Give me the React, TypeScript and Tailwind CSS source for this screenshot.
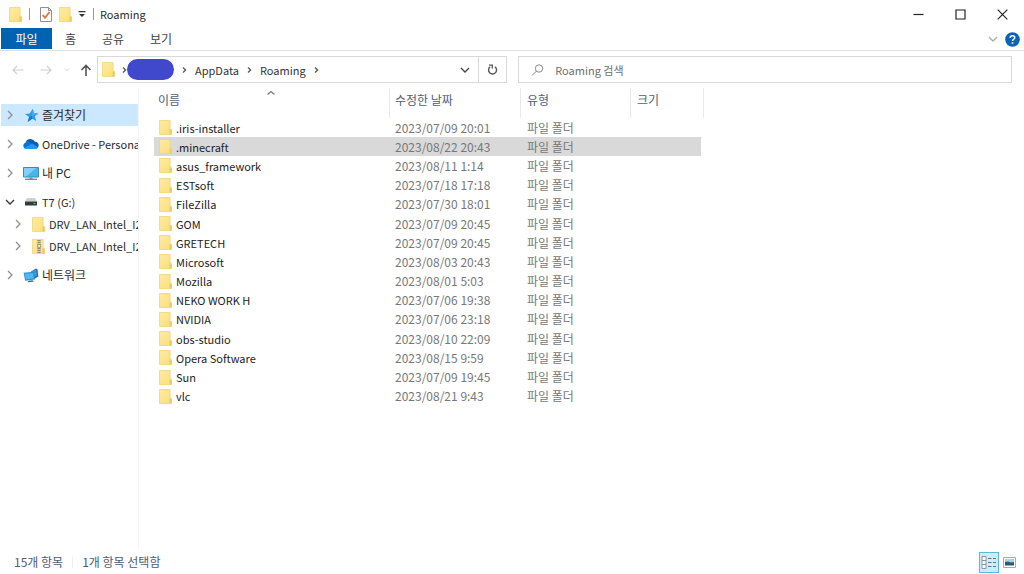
import { useId, type ReactNode } from "react";

type Entry = { name: string; modified: string };

const entries: Entry[] = [
  { name: ".iris-installer", modified: "2023/07/09 20:01" },
  { name: ".minecraft", modified: "2023/08/22 20:43" },
  { name: "asus_framework", modified: "2023/08/11 1:14" },
  { name: "ESTsoft", modified: "2023/07/18 17:18" },
  { name: "FileZilla", modified: "2023/07/30 18:01" },
  { name: "GOM", modified: "2023/07/09 20:45" },
  { name: "GRETECH", modified: "2023/07/09 20:45" },
  { name: "Microsoft", modified: "2023/08/03 20:43" },
  { name: "Mozilla", modified: "2023/08/01 5:03" },
  { name: "NEKO WORK H", modified: "2023/07/06 19:38" },
  { name: "NVIDIA", modified: "2023/07/06 23:18" },
  { name: "obs-studio", modified: "2023/08/10 22:09" },
  { name: "Opera Software", modified: "2023/08/15 9:59" },
  { name: "Sun", modified: "2023/07/09 19:45" },
  { name: "vlc", modified: "2023/08/21 9:43" },
];

function FolderIcon({ zip = false }: { zip?: boolean }) {
  const id = useId();
  return (
    <svg width="13" height="15" viewBox="0 0 13 15" className="shrink-0" aria-hidden="true">
      <defs>
        <linearGradient id={id} x1="0" y1="0" x2="1" y2="1">
          <stop offset="0" stopColor="#ffeba0" />
          <stop offset="1" stopColor="#fade7c" />
        </linearGradient>
      </defs>
      <path d="M.5.5h10.600v8.300l1.400.8v4.900H.5z" fill={`url(#${id})`} stroke="#efd478" strokeWidth=".8" />
      <path d="M10.600 9.200l1.900.6v4.700h-1.900z" fill="#ecc95f" />
      {zip && (
        <>
          <path d="M5 1h4v13H5z" fill="#d8cf9f" />
          <path d="M7 1v13" stroke="#8f8a70" strokeWidth="3" strokeDasharray="1 1" />
          <path d="M5.800 5.500h2.600v3H5.800z" fill="#f4f0dc" stroke="#8a8672" strokeWidth=".7" />
        </>
      )}
    </svg>
  );
}

function Chevron({ dir, className = "" }: { dir: "right" | "down" | "up"; className?: string }) {
  const d = { right: "M3 1l4 4-4 4", down: "M1 3l4 4 4-4", up: "M1.500 6.500L5 3.500l3.500 3" }[dir];
  return (
    <svg width="10" height="10" viewBox="0 0 10 10" fill="none" stroke="currentColor" className={`shrink-0 ${className}`} aria-hidden="true">
      <path d={d} strokeWidth="1.300" />
    </svg>
  );
}

function CrumbArrow() {
  return (
    <svg width="5" height="8" viewBox="0 0 5 8" fill="none" stroke="#555" strokeWidth="1.300" className="shrink-0" aria-hidden="true">
      <path d="M1 1.500L3.600 4 1 6.500" />
    </svg>
  );
}

function StarIcon() {
  return (
    <svg width="15" height="15" viewBox="0 0 15 15" aria-hidden="true">
      <path d="M8.800.8l1.100 4.300 4.500.3-3.600 2.800 1.500 4.900-4.100-2.400-4.500 3.400 1.400-5.200L.9 6l4.800-.6z" fill="#2f9be4" />
      <path d="M8.800.8l-.9 7.300 6.500-2.700-4.500-.3z" fill="#48b0ee" />
      <path d="M8.200 10.700l-4.500 3.400 1.400-5.200 2.800-.8z" fill="#1b79c4" />
    </svg>
  );
}

function CloudIcon() {
  return (
    <svg width="16" height="12" viewBox="0 0 16 12" aria-hidden="true">
      <path d="M3.500 11A3.400 3.400 0 0 1 2.600 4.400 4.900 4.900 0 0 1 11.700 3.700 3.800 3.800 0 0 1 12.500 11z" fill="#1270c9" />
      <path d="M5 3.500 12 7l2.800 2.600A3.600 3.600 0 0 0 11.700 3.700 4.900 4.900 0 0 0 3.900 3z" fill="#0d5cad" />
      <path d="M1 10 9.500 5.500 15 9.500Q14.200 11 12.500 11h-9Q1.800 11 1 10z" fill="#2596ea" />
    </svg>
  );
}

function PcIcon() {
  return (
    <svg width="16" height="15" viewBox="0 0 16 15" aria-hidden="true">
      <path d="M.5 1.500h15v9.500H.5z" fill="#45b4ef" stroke="#4a86ab" />
      <path d="M1 2h12L3 10.500H1z" fill="#82d0f7" />
      <path d="M6.500 11.500h3V13h-3z" fill="#7d8b95" />
      <path d="M2 13.300h12" stroke="#6d8ba1" strokeWidth="1.400" />
    </svg>
  );
}

function DriveIcon() {
  return (
    <svg width="12" height="8" viewBox="0 0 12 8" aria-hidden="true">
      <path d="M2 0h8l2 3.500H0z" fill="#cdd0d0" />
      <path d="M0 3.500h12v4H0z" fill="#353b3b" />
      <path d="M8.500 5.500h2" stroke="#53c5a1" />
    </svg>
  );
}

function NetworkIcon() {
  return (
    <svg width="16" height="15" viewBox="0 0 16 15" aria-hidden="true">
      <path d="M8 3.500 13 .500 14.500 1.500 15.300 8.500 11 11z" fill="#1f6fae" />
      <path d="M8.500 3.800 12.800 1.500 14 7.500 10.500 9z" fill="#3f9bd6" />
      <path d="M.6 4.800 11 3.800l1 7.700-9.800 1.200z" fill="#238fd2" />
      <path d="M1.600 5.700 10.100 4.900l.8 5.700-8 1z" fill="#53b6ec" />
      <path d="M4.500 13l5-.8 1.600 1.300-5.600.8z" fill="#3b6785" />
    </svg>
  );
}

type NavProps = { icon: ReactNode; label: string; latin?: boolean; open?: boolean; nested?: boolean; active?: boolean };

function NavItem({ icon, label, latin = false, open = false, nested = false, active = false }: NavProps) {
  return (
    <li className={active ? "bg-[#cce8ff]" : ""}>
      <button type="button" aria-expanded={open} className={`flex h-[22px] w-full items-center overflow-hidden text-left whitespace-nowrap ${nested ? "pl-3" : "pl-1"}`}>
        <Chevron dir={open ? "down" : "right"} className={open ? "text-[#333]" : "text-[#8f8f8f]"} />
        <span className={`mr-[3px] flex w-4 shrink-0 justify-center ${nested ? "ml-[7px]" : "ml-2"}`}>{icon}</span>
        <span className={latin ? "text-[11px]" : ""}>{label}</span>
      </button>
    </li>
  );
}

export default function App() {
  return (
    <div className="flex min-h-screen flex-col bg-white font-['Noto_Sans_CJK_KR',sans-serif] text-[12px] leading-4 text-[#2b2b2b]">
      <header>
        <div className="flex h-7 items-center pl-[9px]">
          <FolderIcon />
          <span className="ml-[7px] h-3 w-px bg-[#999]" />
          <button type="button" aria-label="속성" className="ml-[10px]">
            <svg width="12" height="15" viewBox="0 0 12 15" fill="none" aria-hidden="true">
              <path d="M.5.5h8l3 3v11H.5z" fill="#fafafa" stroke="#8f8f8f" />
              <path d="M8.500.5v3h3" stroke="#8f8f8f" />
              <path d="M2.700 8l2.300 2.800L9.500 5" stroke="#e2733e" strokeWidth="1.800" />
            </svg>
          </button>
          <button type="button" aria-label="새 폴더" className="ml-[7px]">
            <FolderIcon />
          </button>
          <button type="button" aria-label="빠른 실행 도구 모음 사용자 지정" className="ml-[6px]">
            <svg width="8" height="8" viewBox="0 0 8 8" fill="#333" aria-hidden="true">
              <path d="M.5 1h7v1.200h-7zM1 4h6L4 7z" />
            </svg>
          </button>
          <span className="ml-[7px] h-3 w-px bg-[#999]" />
          <h1 className="ml-[6px] text-[11px]">Roaming</h1>
          <div className="mr-px ml-auto flex">
            <button type="button" aria-label="최소화" className="flex h-7 w-[42px] items-center justify-center">
              <svg width="11" height="11" viewBox="0 0 11 11" stroke="#222" aria-hidden="true"><path d="M.5 5.500h10" strokeWidth="1.200" /></svg>
            </button>
            <button type="button" aria-label="최대화" className="flex h-7 w-[42px] items-center justify-center">
              <svg width="11" height="11" viewBox="0 0 11 11" fill="none" stroke="#222" aria-hidden="true"><path d="M1 1h9v9H1z" strokeWidth="1.200" /></svg>
            </button>
            <button type="button" aria-label="닫기" className="flex h-7 w-[42px] items-center justify-center">
              <svg width="11" height="11" viewBox="0 0 11 11" stroke="#222" aria-hidden="true"><path d="M.7.7l9.600 9.600M10.300.7L.7 10.300" strokeWidth="1.200" /></svg>
            </button>
          </div>
        </div>
        <nav className="flex h-[23px] items-center border-b border-[#dedede] pl-px text-[#444]">
          <button type="button" className="h-[21px] w-[51px] self-start bg-[#0063b1] text-white">파일</button>
          <button type="button" className="w-[37px]">홈</button>
          <button type="button" className="w-12">공유</button>
          <button type="button" className="w-12">보기</button>
          <button type="button" aria-label="리본 확장" className="ml-auto text-[#aaa]"><Chevron dir="down" /></button>
          <button type="button" aria-label="도움말" className="mr-1 ml-[7px]">
            <svg width="15" height="15" viewBox="0 0 15 15" fill="none" aria-hidden="true">
              <circle cx="7.500" cy="7.500" r="7.300" fill="#0864b8" />
              <path d="M5.200 5.700q0-2 2.300-2t2.300 1.900q0 1.100-1.200 1.700-1.100.6-1.100 1.600" stroke="#fff" strokeWidth="1.500" />
              <path d="M6.700 10.200h1.600v1.500H6.700z" fill="#fff" />
            </svg>
          </button>
        </nav>
      </header>

      <div className="flex h-[37px] items-center px-3 py-px text-[11px] text-[#333]">
        <button type="button" aria-label="뒤로" className="text-[#cfcfcf]">
          <svg width="12" height="12" viewBox="0 0 12 12" fill="none" stroke="currentColor" aria-hidden="true"><path d="M11.500 6H1M5 2L1 6l4 4" strokeWidth="1.200" /></svg>
        </button>
        <button type="button" aria-label="앞으로" className="ml-4 text-[#cfcfcf]">
          <svg width="12" height="12" viewBox="0 0 12 12" fill="none" stroke="currentColor" aria-hidden="true"><path d="M.5 6H11M7 2l4 4-4 4" strokeWidth="1.200" /></svg>
        </button>
        <button type="button" aria-label="최근 위치" className="ml-3 text-[#cfcfcf]">
          <svg width="6" height="4" viewBox="0 0 6 4" fill="none" stroke="currentColor" aria-hidden="true"><path d="M1 .7l2 2 2-2" /></svg>
        </button>
        <button type="button" aria-label="위로" className="ml-[10px] text-[#555]">
          <svg width="12" height="12" viewBox="0 0 12 12" fill="none" stroke="currentColor" aria-hidden="true"><path d="M6 12V1.500M1.500 6L6 1.500 10.500 6" strokeWidth="1.600" /></svg>
        </button>
        <div className="ml-[5px] flex h-[27px] min-w-0 flex-[417] items-center border border-[#d9d9d9] pl-1">
          <FolderIcon />
          <span className="ml-[7px]"><CrumbArrow /></span>
          <span className="h-[21px] w-[47px] rounded-full bg-[#4048cb]" />
          <span className="ml-2"><CrumbArrow /></span>
          <a href="#appdata" className="ml-2">AppData</a>
          <span className="ml-2"><CrumbArrow /></span>
          <a href="#roaming" className="ml-2">Roaming</a>
          <span className="ml-2"><CrumbArrow /></span>
          <button type="button" aria-label="이전 위치" className="mr-2 ml-auto text-[#444]"><Chevron dir="down" /></button>
          <button type="button" aria-label="새로 고침" className="flex w-7 items-center justify-center self-stretch border-l border-[#d9d9d9]">
            <svg width="11" height="12" viewBox="0 0 11 12" fill="none" stroke="#555" aria-hidden="true"><path d="M8 2.800A4 4 0 1 1 3 2.900" strokeWidth="1.400" /><path d="M2 1.200h3.300v3.300" strokeWidth="1.300" /></svg>
          </button>
        </div>
        <label className="ml-[11px] flex h-[27px] min-w-0 flex-[495] items-center border border-[#d9d9d9] pl-3">
          <svg width="13" height="12" viewBox="0 0 13 12" fill="none" stroke="#888" aria-hidden="true"><circle cx="8" cy="4.500" r="3.700" /><path d="M5.300 7.200L1 11.500" /></svg>
          <input type="search" aria-label="Roaming 검색" placeholder="Roaming 검색" className="ml-[11px] min-w-0 flex-1 bg-transparent outline-none placeholder:text-[#6d6d6d]" />
        </label>
      </div>

      <div className="flex flex-1">
        <nav className="w-[139px] shrink-0 border-r border-[#f5f5f5] pt-4">
          <ul className="flex flex-col gap-[7px] pl-px">
            <NavItem active icon={<StarIcon />} label="즐겨찾기" />
            <NavItem latin icon={<CloudIcon />} label="OneDrive - Persona" />
            <NavItem icon={<PcIcon />} label="내 PC" />
            <li>
              <ul>
                <NavItem latin open icon={<DriveIcon />} label="T7 (G:)" />
                <NavItem latin nested icon={<FolderIcon />} label="DRV_LAN_Intel_I22" />
                <NavItem latin nested icon={<FolderIcon zip />} label="DRV_LAN_Intel_I22" />
              </ul>
            </li>
            <NavItem icon={<NetworkIcon />} label="네트워크" />
          </ul>
        </nav>
        <main className="pl-[15px]">
          <table className="h-[318px] table-fixed border-separate border-spacing-0 text-left">
            <colgroup>
              <col className="w-[236px]" />
              <col className="w-[131px]" />
              <col className="w-[110px]" />
              <col className="w-[73px]" />
            </colgroup>
            <thead className="text-[#4c607a]">
              <tr className="h-[30px]">
                <th className="relative border-r border-[#e8e8e8] pb-[6px] pl-1 font-normal">
                  이름
                  <Chevron dir="up" className="absolute top-0 left-28 text-[#777]" />
                </th>
                <th className="border-r border-[#e8e8e8] pb-[6px] pl-[5px] font-normal">수정한 날짜</th>
                <th className="border-r border-[#e8e8e8] pb-[6px] pl-[6px] font-normal">유형</th>
                <th className="border-r border-[#e8e8e8] pb-[6px] pl-[6px] font-normal">크기</th>
              </tr>
            </thead>
            <tbody className="text-[#777]">
              {entries.map((entry, i) => (
                <tr key={entry.name} className={i === 1 ? "bg-[#d9d9d9]" : ""}>
                  <td className="p-0 pl-[5px] text-[11px] text-[#222]">
                    <span className="flex items-center gap-1"><FolderIcon />{entry.name}</span>
                  </td>
                  <td className="p-0 pl-[5px]">{entry.modified}</td>
                  <td className="p-0 pl-[6px]">파일 폴더</td>
                  <td className="border-r-3 border-white p-0" />
                </tr>
              ))}
            </tbody>
          </table>
        </main>
      </div>

      <footer className="flex h-6 items-center pr-2 pl-[14px] text-[#4c5c70]">
        <span>15개 항목</span>
        <span className="mx-[9px] h-3 w-px bg-[#f0f0f0]" />
        <span>1개 항목 선택함</span>
        <button type="button" aria-label="자세히" className="ml-auto flex h-[21px] w-5 items-center justify-center border border-[#5bb8dc] bg-[#cdecf9]">
          <svg width="16" height="13" viewBox="0 0 16 13" fill="none" aria-hidden="true">
            <path d="M1 .5h4v12H1zM1 4.500h4M1 8.500h4" fill="#fff" stroke="#8a979d" />
            <path d="M7 2.500h3.500M12 2.500h3M7 6.500h3.500M12 6.500h3M7 10.500h3.500M12 10.500h3" stroke="#66757c" />
          </svg>
        </button>
        <button type="button" aria-label="큰 아이콘" className="ml-1">
          <svg width="13" height="11" viewBox="0 0 13 11" aria-hidden="true">
            <path d="M.5.500h12v10H.5z" fill="#fff" stroke="#aaa" />
            <path d="M2 2h9v4H2z" fill="#a9d2ef" />
            <path d="M2 5l3-.5 3 1 3-.5v3.500H2z" fill="#33566f" />
          </svg>
        </button>
      </footer>
    </div>
  );
}
